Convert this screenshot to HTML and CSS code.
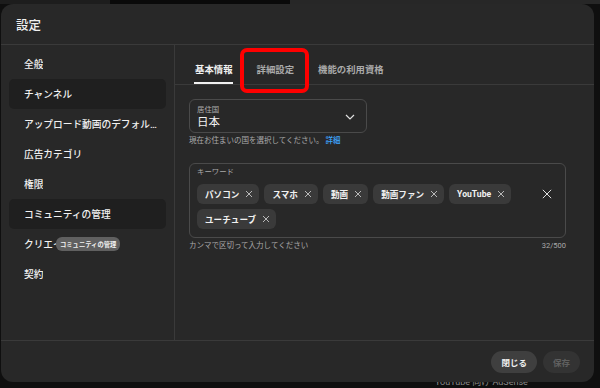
FILE: index.html
```html
<!doctype html>
<html lang="ja">
	<head>
		<meta charset="utf-8">
		<title>設定</title>
		<link rel="stylesheet" href="styles.css">
	</head>
	<body>
		<div class="behind">YouTube 向け AdSense</div>

		<div class="dialog">
			<header class="dialog-header">設定</header>

			<div class="dialog-body">
				<nav class="sidebar">
					<div class="nav-item"><span class="nav-label">全般</span></div>
					<div class="nav-item is-active"><span class="nav-label">チャンネル</span></div>
					<div class="nav-item"><span class="nav-label">アップロード動画のデフォルト設定</span></div>
					<div class="nav-item"><span class="nav-label">広告カテゴリ</span></div>
					<div class="nav-item"><span class="nav-label">権限</span></div>
					<div class="nav-item is-active"><span class="nav-label">コミュニティの管理</span></div>
					<div class="nav-item">
						<span class="nav-label">クリエイター</span>
						<span class="tooltip">コミュニティの管理</span>
					</div>
					<div class="nav-item"><span class="nav-label">契約</span></div>
				</nav>

				<main class="content">
					<div class="tabs">
						<div class="tab is-active">基本情報</div>
						<div class="tab is-marked">詳細設定</div>
						<div class="tab">機能の利用資格</div>
					</div>

					<div class="panel">
						<div class="select">
							<div class="select-text">
								<span class="field-label">居住国</span>
								<span class="select-value">日本</span>
							</div>
							<svg class="chevron" width="10" height="6" viewBox="0 0 10 6">
								<polyline points="1,1 5,5 9,1" fill="none" stroke="#e0e0e0" stroke-width="1.2" />
							</svg>
						</div>
						<div class="hint">現在お住まいの国を選択してください。 <a class="hint-link">詳細</a></div>

						<div class="keywords">
							<span class="field-label">キーワード</span>
							<div class="keywords-row">
								<div class="chips">
									<span class="chip">パソコン<svg class="chip-x" viewBox="0 0 8 8"><path d="M1 1L7 7M7 1L1 7" /></svg></span>
									<span class="chip">スマホ<svg class="chip-x" viewBox="0 0 8 8"><path d="M1 1L7 7M7 1L1 7" /></svg></span>
									<span class="chip">動画<svg class="chip-x" viewBox="0 0 8 8"><path d="M1 1L7 7M7 1L1 7" /></svg></span>
									<span class="chip">動画ファン<svg class="chip-x" viewBox="0 0 8 8"><path d="M1 1L7 7M7 1L1 7" /></svg></span>
									<span class="chip">YouTube<svg class="chip-x" viewBox="0 0 8 8"><path d="M1 1L7 7M7 1L1 7" /></svg></span>
									<span class="chip">ユーチューブ<svg class="chip-x" viewBox="0 0 8 8"><path d="M1 1L7 7M7 1L1 7" /></svg></span>
								</div>
								<svg class="clear-all" viewBox="0 0 12 12"><path d="M1 1L11 11M11 1L1 11" /></svg>
							</div>
						</div>
						<div class="hint hint-row">
							<span>カンマで区切って入力してください</span>
							<span>32/500</span>
						</div>
					</div>
				</main>
			</div>

			<footer class="dialog-footer">
				<button class="btn">閉じる</button>
				<button class="btn is-disabled">保存</button>
			</footer>
		</div>
	</body>
</html>
```

FILE: styles.css
```css
html {
	font-family: Roboto, "Noto Sans CJK JP", sans-serif;
}

body {
	margin: 0;
	width: 600px;
	height: 388px;
	overflow: hidden;
	position: relative;
	background-color: #0f0f0f;
	background-image: linear-gradient(to right, #1d1d1d 0 110px, #0a0a0a 110px 290px, #272727 290px);
	background-size: 100% 4px;
	background-repeat: no-repeat;
	color: #f1f1f1;
}

.behind {
	position: absolute;
	left: 435px;
	top: 377px;
	font-size: 9px;
	line-height: 11px;
	color: #8a8a8a;
}

.dialog {
	position: relative;
	z-index: 1;
	margin: 4px 0 0 1px;
	width: 593px;
	height: 378px;
	background: #282828;
	border-radius: 12px;
	display: flex;
	flex-direction: column;
	box-sizing: border-box;
}

.dialog-header {
	height: 40px;
	padding-left: 15px;
	display: flex;
	align-items: center;
	font-size: 12.5px;
	font-weight: 500;
	border-bottom: 1px solid #3a3a3a;
}

.dialog-body {
	height: 295px;
	display: flex;
}

/* sidebar */

.sidebar {
	width: 157px;
	padding: 4px 8px;
	border-right: 1px solid #3a3a3a;
}

.nav-item {
	position: relative;
	height: 30px;
	padding: 0 4px 0 15px;
	display: flex;
	align-items: center;
	border-radius: 5px;
	font-size: 9.7px;
	font-weight: 500;
}

.nav-item.is-active {
	background: #1f1f1f;
}

.nav-label {
	white-space: nowrap;
	overflow: hidden;
	text-overflow: ellipsis;
}

.tooltip {
	position: absolute;
	left: 47px;
	top: 8px;
	height: 14px;
	padding: 0 4px;
	display: flex;
	align-items: center;
	border-radius: 6px;
	background: #606060;
	font-size: 6.3px;
	font-weight: 700;
	white-space: nowrap;
}

/* content */

.content {
	flex: 1;
}

.tabs {
	height: 39px;
	padding-left: 20px;
	display: flex;
	gap: 24px;
	border-bottom: 1px solid #3a3a3a;
}

.tab {
	position: relative;
	padding-top: 8px;
	display: flex;
	align-items: center;
	font-size: 9.4px;
	font-weight: 700;
	color: #aaaaaa;
}

.tab.is-active {
	color: #f1f1f1;
}

.tab.is-active::after {
	content: "";
	position: absolute;
	left: -1px;
	right: 0;
	bottom: 0;
	height: 2px;
	background: #f1f1f1;
}

.tab.is-marked::before {
	content: "";
	position: absolute;
	left: -17px;
	top: 3px;
	width: 69px;
	height: 45px;
	box-sizing: border-box;
	border: 4px solid #ff0000;
	border-radius: 7px;
}

.panel {
	padding: 14px 0 0 14px;
}

.select {
	width: 178px;
	height: 34px;
	box-sizing: border-box;
	padding: 2px 11px 0 7px;
	display: flex;
	align-items: center;
	justify-content: space-between;
	border: 1px solid #4a4a4a;
	border-radius: 6px;
}

.select-text {
	display: flex;
	flex-direction: column;
}

.field-label {
	display: block;
	font-size: 7.4px;
	line-height: 10px;
	color: #aaaaaa;
}

.select-value {
	font-size: 11.5px;
	line-height: 15px;
}

.hint {
	margin-top: 3px;
	font-size: 7.5px;
	line-height: 10px;
	color: #aaaaaa;
}

.hint-link {
	color: #3ea6ff;
	font-weight: 500;
}

.keywords {
	margin-top: 17px;
	width: 377px;
	box-sizing: border-box;
	padding: 3px 13px 8px 7px;
	border: 1px solid #4a4a4a;
	border-radius: 6px;
}

.keywords-row {
	margin-top: 7px;
	display: flex;
	align-items: flex-start;
	gap: 12px;
}

.chips {
	flex: 1;
	display: flex;
	flex-wrap: wrap;
	gap: 5px;
}

.chip {
	height: 20px;
	padding: 0 6px 0 8px;
	display: inline-flex;
	align-items: center;
	gap: 6px;
	border-radius: 6px;
	background: #3a3a3a;
	font-size: 8.6px;
	font-weight: 700;
}

.chip-x {
	width: 8px;
	height: 8px;
	stroke: #b8b8b8;
	stroke-width: 1;
}

.clear-all {
	margin-top: 5px;
	width: 10px;
	height: 10px;
	stroke: #e0e0e0;
	stroke-width: 1.2;
}

.hint-row {
	width: 377px;
	display: flex;
	justify-content: space-between;
}

/* footer */

.dialog-footer {
	flex: 1;
	padding-right: 14px;
	display: flex;
	align-items: center;
	justify-content: flex-end;
	gap: 6px;
	border-top: 1px solid #3a3a3a;
}

.btn {
	height: 22px;
	padding: 0 10px;
	border: none;
	border-radius: 11px;
	background: #3f3f3f;
	color: #f1f1f1;
	font-family: inherit;
	font-size: 8.5px;
	font-weight: 700;
	cursor: pointer;
}

.btn.is-disabled {
	background: #333333;
	color: #606060;
}
```
